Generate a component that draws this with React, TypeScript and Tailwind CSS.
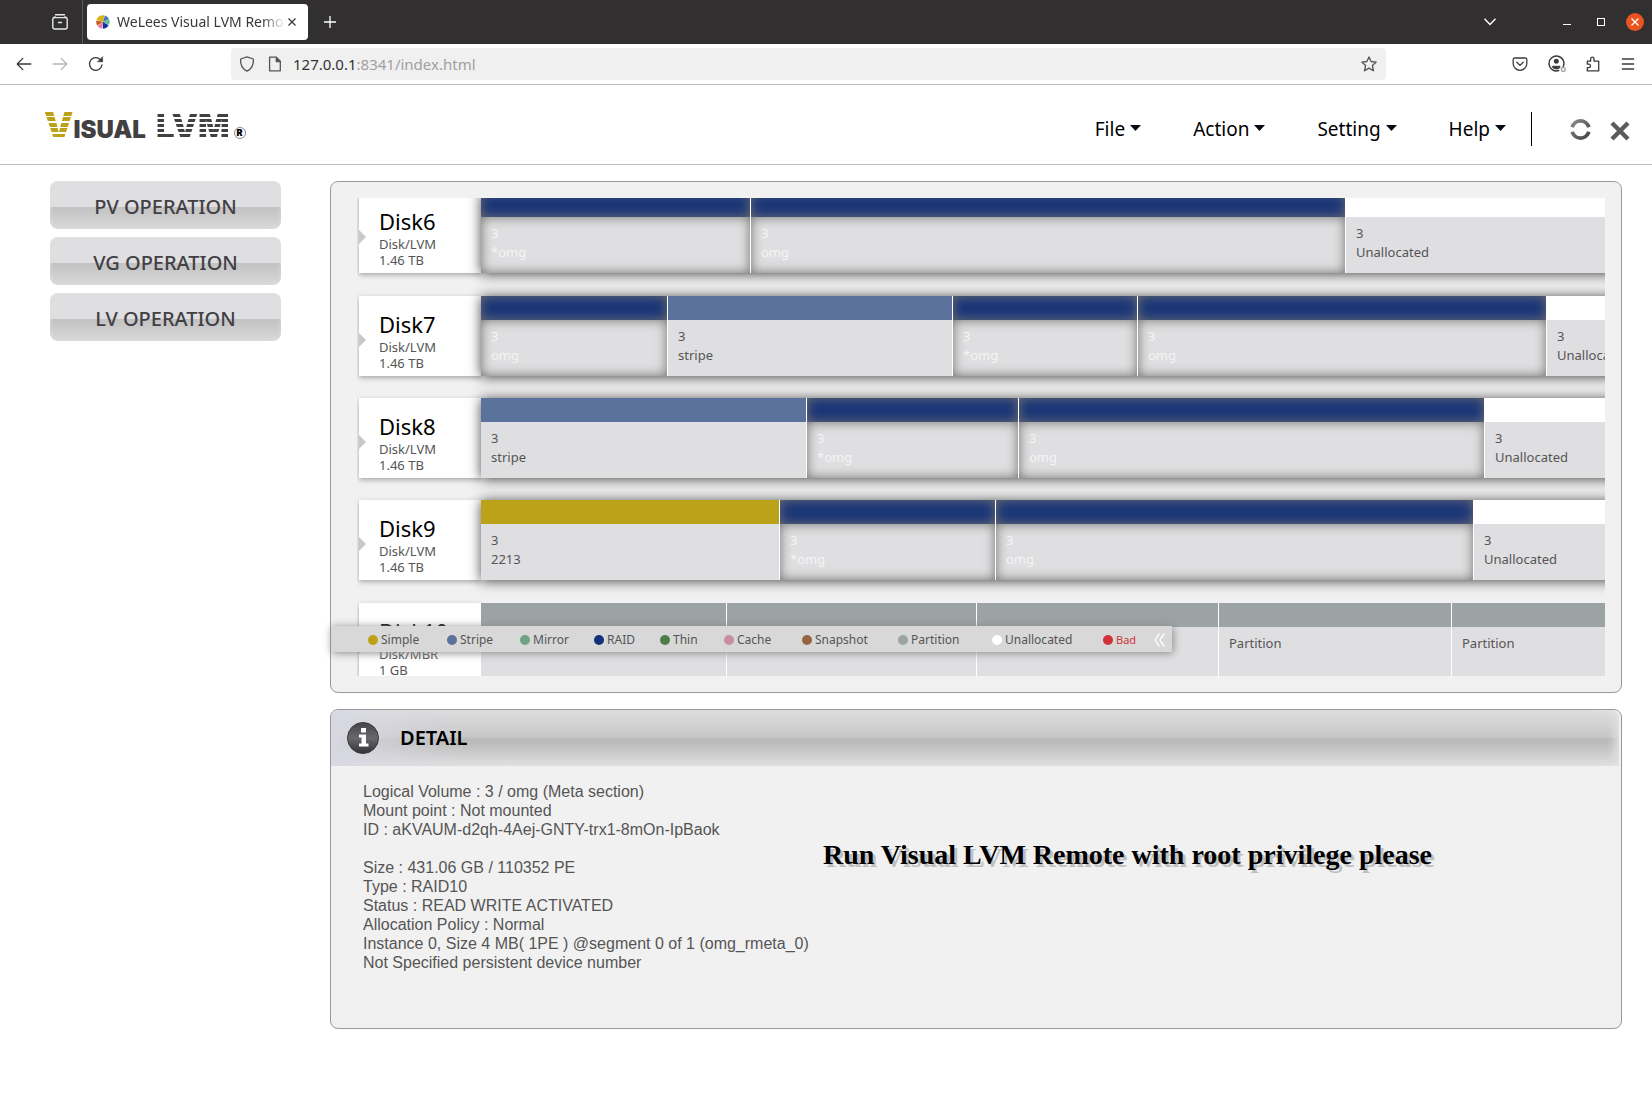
import React from "react";

type Kind = "simple" | "stripe" | "raid" | "partition" | "free";
type Segment = { kind: Kind; size: number; lines: string[] };
type Disk = { name: string; type: string; size: string; active: boolean; segments: Segment[] };

const STRIP: Record<Kind, string> = {
  simple: "bg-[#bca218]",
  stripe: "bg-[#5b739c]",
  raid: "bg-[#1a3578] shadow-[inset_0_0_12px_#707070]",
  partition: "bg-[#9ba3a4]",
  free: "bg-white",
};

const raid = (size: number, name: string): Segment => ({ kind: "raid", size, lines: ["3", name] });
const free = (size: number): Segment => ({ kind: "free", size, lines: ["3", "Unallocated"] });
const part = (size: number): Segment => ({ kind: "partition", size, lines: ["Partition"] });

const DISKS: Disk[] = [
  { name: "Disk6", type: "Disk/LVM", size: "1.46 TB", active: true, segments: [raid(270, "*omg"), raid(595, "omg"), free(259)] },
  {
    name: "Disk7", type: "Disk/LVM", size: "1.46 TB", active: true,
    segments: [raid(187, "omg"), { kind: "stripe", size: 285, lines: ["3", "stripe"] }, raid(185, "*omg"), raid(409, "omg"), free(58)],
  },
  {
    name: "Disk8", type: "Disk/LVM", size: "1.46 TB", active: true,
    segments: [{ kind: "stripe", size: 326, lines: ["3", "stripe"] }, raid(212, "*omg"), raid(466, "omg"), free(120)],
  },
  {
    name: "Disk9", type: "Disk/LVM", size: "1.46 TB", active: true,
    segments: [{ kind: "simple", size: 299, lines: ["3", "2213"] }, raid(216, "*omg"), raid(478, "omg"), free(131)],
  },
  { name: "Disk10", type: "Disk/MBR", size: "1 GB", active: false, segments: [part(246), part(250), part(242), part(233), part(153)] },
];

const LEGEND: [string, string][] = [
  ["Simple", "bg-[#bca218]"],
  ["Stripe", "bg-[#5b739c]"],
  ["Mirror", "bg-[#6fa287]"],
  ["RAID", "bg-[#15307a]"],
  ["Thin", "bg-[#4f7d49]"],
  ["Cache", "bg-[#c98da3]"],
  ["Snapshot", "bg-[#946540]"],
  ["Partition", "bg-[#9ba3a4]"],
  ["Unallocated", "bg-white"],
  ["Bad", "bg-[#cf3337]"],
];

const DETAILS = [
  "Logical Volume : 3 / omg (Meta section)",
  "Mount point : Not mounted",
  "ID : aKVAUM-d2qh-4Aej-GNTY-trx1-8mOn-IpBaok",
  "",
  "Size : 431.06 GB / 110352 PE",
  "Type : RAID10",
  "Status : READ WRITE ACTIVATED",
  "Allocation Policy : Normal",
  "Instance 0, Size 4 MB( 1PE ) @segment 0 of 1 (omg_rmeta_0)",
  "Not Specified persistent device number",
];

function Icon({ size = 16, className = "", children }: { size?: number; className?: string; children: React.ReactNode }) {
  return (
    <svg width={size} height={size} viewBox="0 0 16 16" fill="none" stroke="currentColor" strokeWidth="1.3" strokeLinecap="round" strokeLinejoin="round" className={`shrink-0 ${className}`} aria-hidden="true">
      {children}
    </svg>
  );
}

function Favicon() {
  return (
    <svg width="14" height="14" viewBox="0 0 14 14" className="shrink-0" aria-hidden="true">
      <path d="M7 7 0.5 5A6.6 6.6 0 0 1 8.5 0.4Z" fill="#d9b310" />
      <path d="M7 7 8.8 0.5A6.6 6.6 0 0 1 13 4.2Z" fill="#4a78c8" />
      <path d="M7 7 13.2 4.6A6.6 6.6 0 0 1 12.9 9.8Z" fill="#5cc08c" />
      <path d="M7 7 12.6 10.3A6.6 6.6 0 0 1 7 13.8Z" fill="#1530a0" />
      <path d="M7 7 6.4 13.7A6.6 6.6 0 0 1 1.6 11Z" fill="#e67aa0" />
      <path d="M7 7 1.2 10.4A6.6 6.6 0 0 1 0.4 5.6Z" fill="#c45a28" />
    </svg>
  );
}

function TitleBar() {
  return (
    <div className="flex h-11 items-center bg-[#322f31] text-white">
      <button aria-label="Recent browsing" className="ml-[52px]">
        <svg width="16" height="16" viewBox="0 0 16 16" fill="none" stroke="#e8e8e8" strokeWidth="1.4" strokeLinecap="round" aria-hidden="true">
          <path d="M3.5 0.8h9" />
          <rect x="0.8" y="3.6" width="14.4" height="11.4" rx="2" />
          <path d="M1.5 3.6 3 2.8M14.5 3.6 13 2.8M6.5 8.5h3" />
        </svg>
      </button>
      <div className="ml-3.5 h-full w-px bg-[#5c595b]" />
      <div className="ml-1 flex h-9 w-[221px] items-center rounded bg-white pl-[9px] text-[#3a383a]">
        <Favicon />
        <span className="ml-[7px] w-[168px] overflow-hidden text-sm whitespace-nowrap [mask-image:linear-gradient(to_right,black_145px,transparent_168px)]">
          WeLees Visual LVM Remote
        </span>
        <button aria-label="Close tab" className="ml-[3px]">
          <svg width="8" height="8" viewBox="0 0 8 8" stroke="currentColor" strokeWidth="1.3" aria-hidden="true"><path d="M0.5 0.5 7.5 7.5M7.5 0.5 0.5 7.5" /></svg>
        </button>
      </div>
      <button aria-label="New tab" className="ml-4">
        <svg width="12" height="12" viewBox="0 0 12 12" stroke="currentColor" strokeWidth="1.3" aria-hidden="true"><path d="M6 0v12M0 6h12" /></svg>
      </button>
      <button aria-label="List all tabs" className="ml-auto">
        <svg width="12" height="8" viewBox="0 0 12 8" fill="none" stroke="currentColor" strokeWidth="1.4" aria-hidden="true"><path d="M0.5 0.8 6 6.6 11.5 0.8" /></svg>
      </button>
      <button aria-label="Minimize" className="ml-[67px]">
        <svg width="8" height="8" viewBox="0 0 8 8" stroke="currentColor" aria-hidden="true"><path d="M0 6.5h8" /></svg>
      </button>
      <button aria-label="Maximize" className="ml-[26px]">
        <svg width="8" height="8" viewBox="0 0 8 8" fill="none" stroke="currentColor" aria-hidden="true"><rect x="0.5" y="0.5" width="7" height="7" /></svg>
      </button>
      <button aria-label="Close window" className="mr-2 ml-[21px] flex size-[18px] items-center justify-center rounded-full bg-[#e95420]">
        <svg width="8" height="8" viewBox="0 0 8 8" stroke="currentColor" strokeWidth="1.3" aria-hidden="true"><path d="M0.5 0.5 7.5 7.5M7.5 0.5 0.5 7.5" /></svg>
      </button>
    </div>
  );
}

function Toolbar() {
  return (
    <div className="flex h-[41px] items-center border-b border-[#bdbdbd] bg-white text-[#3b3b3b]">
      <button aria-label="Back" className="ml-4"><Icon><path d="M1.2 8h13.6M6.8 2.4 1.2 8l5.6 5.6" /></Icon></button>
      <button aria-label="Forward" className="ml-5 text-[#b5b5b5]"><Icon><path d="M14.8 8H1.2M9.2 2.4 14.8 8l-5.6 5.6" /></Icon></button>
      <button aria-label="Reload" className="ml-5">
        <Icon><path d="M14 9a6.3 6.3 0 1 1-1.6-5.3L13.8 5.2" /><path d="M14.6 1v4.8H9.8Z" fill="currentColor" strokeWidth="0.6" /></Icon>
      </button>
      <div className="ml-[127px] flex h-8 flex-1 items-center rounded bg-[#f0f0f0] pr-[9px] pl-2">
        <Icon className="text-[#555]"><path d="M8 0.9 14.4 3c.4 5.6-1.6 9.8-6.4 12.2C3.2 12.8 1.2 8.6 1.6 3Z" /></Icon>
        <Icon className="ml-3 text-[#555]"><path d="M3.3 1.2h6l4 4v9.6h-10.7V1.2Z" /><path d="M9.3 1.5v4h4" fill="currentColor" /></Icon>
        <div className="relative ml-[10px] flex-1 text-[15px]">
          <span aria-hidden="true" className="text-[#a0a0a0]"><span className="text-[#333]">127.0.0.1</span>:8341/index.html</span>
          <input aria-label="Address" defaultValue="" className="absolute inset-0 w-full bg-transparent outline-none" />
        </div>
        <button aria-label="Bookmark this page" className="text-[#555]">
          <Icon><path d="M8 0.9 10.1 5.5 15.2 6.1 11.4 9.5 12.5 14.8 8 12.1 3.5 14.8 4.6 9.5 0.8 6.1 5.9 5.5Z" /></Icon>
        </button>
      </div>
      <button aria-label="Save to Pocket" className="ml-[126px]"><Icon><path d="M2.5 2h11a1.3 1.3 0 0 1 1.3 1.3V7.5a6.8 6.8 0 0 1-13.6 0V3.3A1.3 1.3 0 0 1 2.5 2ZM4.8 6.3 8 9.4l3.2-3.1" /></Icon></button>
      <button aria-label="Account" className="ml-5">
        <Icon size={18}><path d="M13.4 10.5A6.6 6.6 0 1 0 9.5 13.8" /><circle cx="7.4" cy="5.6" r="1.6" fill="currentColor" /><path d="M4.2 10h6.4v1.2a4.5 4.5 0 0 1-6.4 0Z" fill="currentColor" strokeWidth="0.8" /><circle cx="13.6" cy="12.9" r="1.7" stroke="#aaa" /></Icon>
      </button>
      <button aria-label="Extensions" className="ml-[19px]"><Icon><path d="M2.3 5.2h3.3V2.9a1.7 1.7 0 0 1 3.4 0v2.3h4.7v9.7H2.3v-3.3h1.5a1.7 1.7 0 0 0 0-3.4H2.3Z" /></Icon></button>
      <button aria-label="Open application menu" className="mr-[17px] ml-5"><Icon size={14}><path d="M1 2.3h14M1 8h14M1 13.7h14" strokeWidth="1.5" strokeLinecap="butt" /></Icon></button>
    </div>
  );
}

function Logo() {
  return (
    <h1 aria-label="Visual LVM" className="ml-11 flex items-end pb-[25px] font-['Inter',sans-serif] font-black text-[#434042]">
      <span className="bg-[repeating-linear-gradient(to_bottom,#bca218_0_14%,transparent_14%_20%)] bg-clip-text text-[37px] leading-[27px] text-transparent">V</span>
      <span className="text-2xl leading-[18px]">ISUAL</span>
      <span className="ml-2.5 bg-[repeating-linear-gradient(to_bottom,#434042_0_14%,transparent_14%_20%)] bg-clip-text text-[33px] leading-[25px] text-transparent">LVM</span>
      <span className="ml-1 flex size-3 items-center justify-center rounded-full border border-[#888] text-[9px] leading-3 text-black">R</span>
    </h1>
  );
}

function Header() {
  return (
    <header className="flex h-20 items-end border-b border-[#c0c0c0] bg-white">
      <Logo />
      <nav className="ml-auto flex h-[79px] items-center text-black">
        {["File", "Action", "Setting", "Help"].map((label) => (
          <button key={label} className="mr-[52px] flex items-center gap-[5px] pt-2 text-[19px] leading-6 last-of-type:mr-[25px]">
            {label}
            <svg width="11" height="6" viewBox="0 0 11 6" className="mb-0.5" aria-hidden="true"><path d="M0 0h11L5.5 6Z" fill="#0a0a14" /></svg>
          </button>
        ))}
        <div className="mt-2 h-[34px] w-px bg-black" />
        <div className="flex items-center pt-2">
          <button aria-label="Refresh" className="mt-0.5 ml-[38px]">
            <svg width="21" height="21" viewBox="0 0 21 21" fill="none" stroke="url(#metal)" strokeWidth="3.8" aria-hidden="true">
              <defs><linearGradient id="metal" x1="0" y1="0" x2="1" y2="1"><stop offset="0" stopColor="#8a8a8a" /><stop offset="0.5" stopColor="#666" /><stop offset="1" stopColor="#444" /></linearGradient></defs>
              <path d="M2.2 8.3A8.6 8.6 0 0 1 18.8 8.3M18.8 12.7A8.6 8.6 0 0 1 2.2 12.7" />
            </svg>
          </button>
          <button aria-label="Exit" className="mt-1 mr-[22px] ml-[19px]">
            <svg width="20" height="20" viewBox="0 0 20 20" fill="none" stroke="#5c5a5b" strokeWidth="4.4" aria-hidden="true"><path d="M2 2 18 18M18 2 2 18" /></svg>
          </button>
        </div>
      </nav>
    </header>
  );
}

function DiskRow({ disk }: { disk: Disk }) {
  return (
    <li className="flex h-20 shrink-0 first:-mt-[5px] first:mb-px last:mt-px">
      <div className="flex w-[122px] shrink-0 items-center bg-white shadow-[0_2px_5px_#a8a8a8]">
        <svg width="7" height="14" viewBox="0 0 7 14" className="mt-2" aria-hidden="true"><path d="M0 0 7 7 0 14Z" fill="#c8c8c8" /></svg>
        <div className="pt-[9px] pl-[13px] text-[13px] leading-4 text-[#555]">
          <h2 className="mb-px text-[22px] leading-7 text-black">{disk.name}</h2>
          <p>{disk.type}</p>
          <p>{disk.size}</p>
        </div>
      </div>
      <div
        className={`-mr-5 grid flex-1 pr-5 ${disk.active ? "shadow-[0_1px_12px_rgba(0,0,0,0.72)]" : ""}`}
        style={{ gridTemplateColumns: disk.segments.map((s) => `minmax(0, ${s.size}fr)`).join(" ") }}
      >
        {disk.segments.map((s, i) => (
          <div key={i} className="flex flex-col overflow-hidden border-r border-white whitespace-nowrap last:border-r-0">
            <div className={`h-6 ${STRIP[s.kind]}`} />
            <div
              className={`flex-1 bg-[#dfdfe1] pt-[7px] pl-2.5 text-[13px] leading-[19px] ${
                s.kind === "raid" ? "text-[#f4f4f4] shadow-[inset_0_0_12px_#707070]" : "text-[#555]"
              }`}
            >
              {s.lines.map((line) => <p key={line}>{line}</p>)}
            </div>
          </div>
        ))}
      </div>
    </li>
  );
}

function Legend() {
  return (
    <div className="absolute bottom-10 left-0 grid h-[26px] grid-cols-[79px_73px_74px_66px_64px_78px_96px_94px_111px_51px_18px] items-center bg-[#d8d8d8] pt-0.5 pl-[37px] text-xs text-[#555] shadow-[1px_1px_8px_#888]">
      {LEGEND.map(([name, color]) => (
        <span key={name} className={`flex items-center gap-[3px] ${name === "Bad" ? "text-[11px] text-[#cf3337]" : ""}`}>
          <span className={`size-2.5 rounded-full ${color}`} />
          {name}
        </span>
      ))}
      <button aria-label="Collapse legend">
        <svg width="11" height="14" viewBox="0 0 11 14" fill="none" stroke="#fafafa" strokeWidth="1.5" aria-hidden="true"><path d="M5.5 0.5 1 7l4.5 6.5M10.3 0.5 5.8 7l4.5 6.5" /></svg>
      </button>
    </div>
  );
}

function InfoIcon() {
  return (
    <svg width="32" height="32" viewBox="0 0 32 32" aria-hidden="true">
      <defs><linearGradient id="info" x1="0" y1="0" x2="0" y2="1"><stop offset="0" stopColor="#454347" /><stop offset="0.5" stopColor="#6a686c" /><stop offset="1" stopColor="#333135" /></linearGradient></defs>
      <circle cx="16" cy="16" r="15.5" fill="url(#info)" stroke="#3c3a3e" />
      <path d="M14 6h5v4.5h-5ZM12 12.500h7v9h2.500V24.500H12V21.500h2.500v-6H12Z" fill="#fff" />
    </svg>
  );
}

export default function App() {
  return (
    <div className="min-h-screen bg-white font-['Noto_Sans',sans-serif]">
      <TitleBar />
      <Toolbar />
      <Header />
      <div className="flex pt-4 pr-[30px] pl-[50px]">
        <aside className="mr-[49px] flex w-[231px] shrink-0 flex-col gap-2">
          {["PV OPERATION", "VG OPERATION", "LV OPERATION"].map((label) => (
            <button
              key={label}
              className="h-12 rounded-lg bg-[linear-gradient(to_bottom,#dfdfe1_0_26px,#c2c2c2_26px,#d8d8d9_48px)] pt-1 text-xl font-medium text-[#434045] shadow-[inset_0_0_5px_#dfdfe1]"
            >
              {label}
            </button>
          ))}
        </aside>
        <main className="flex min-w-0 flex-1 flex-col gap-4">
          <section aria-label="Disks" className="relative rounded-lg border border-[#999] bg-[#f1f1f1] py-4 pr-4 pl-[26px]">
            <ul className="flex h-[478px] flex-col gap-[22px] overflow-hidden pl-0.5">
              {DISKS.map((d) => <DiskRow key={d.name} disk={d} />)}
            </ul>
            <Legend />
          </section>
          <section aria-label="Detail" className="flex h-80 flex-col overflow-hidden rounded-lg border border-[#999] bg-[#f1f1f1]">
            <div className="mr-0.5 flex h-14 items-center gap-[21px] rounded-t-lg bg-[linear-gradient(to_right,#d8d8e2,transparent_130px),linear-gradient(to_bottom,#dededf,#c7c7c8_27px,#b9b9b9_29px,#bdbdbd_34px,#e0e0e1)] pl-4 shadow-[inset_-8px_0_10px_-4px_#e2e2e4]">
              <InfoIcon />
              <h2 className="text-xl font-semibold text-black">DETAIL</h2>
            </div>
            <div className="flex pt-4 pl-8 font-['Liberation_Sans',sans-serif] leading-[19px] text-[#555]">
              <div className="w-[460px] shrink-0">
                {DETAILS.map((line, i) => <p key={i} className="min-h-[19px]">{line}</p>)}
              </div>
              <p className="mt-[57px] font-['Liberation_Serif',serif] text-[28px] leading-8 font-bold text-black [text-shadow:3px_3px_0_#c0c0c0]">
                Run Visual LVM Remote with root privilege please
              </p>
            </div>
          </section>
        </main>
      </div>
    </div>
  );
}
